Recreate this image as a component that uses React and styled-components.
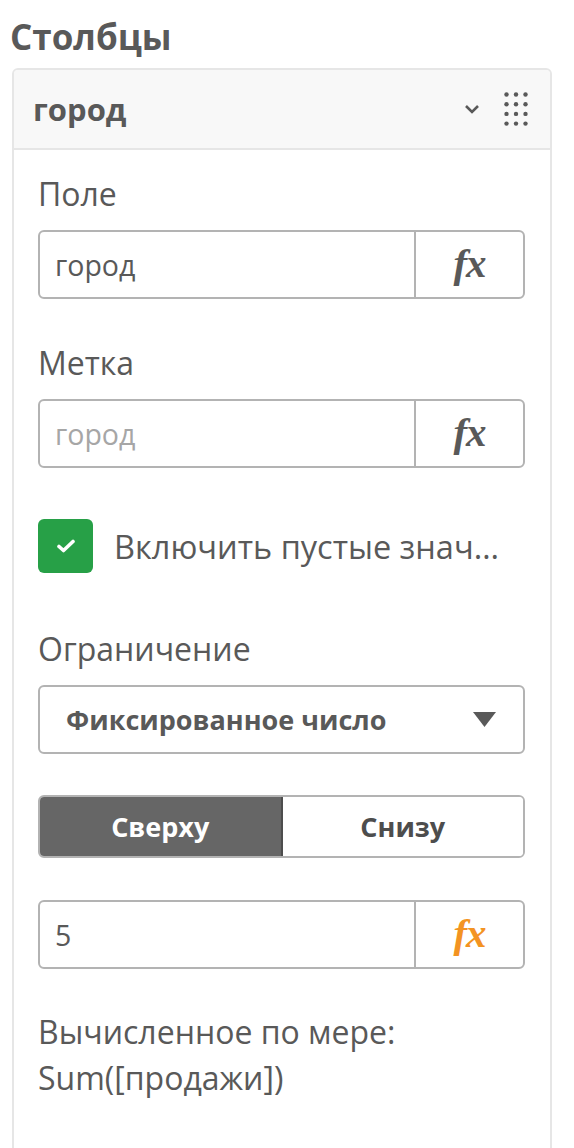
import React from "react"
import styled, { createGlobalStyle } from "styled-components"

const GlobalStyle = createGlobalStyle`
  * { box-sizing: border-box; }
  body {
    margin: 0;
    background: #ffffff;
    font-family: "Open Sans", "Liberation Sans", sans-serif;
    color: #595959;
  }
`

const Page = styled.div`
  padding: 14px 22px 0 12px;
  height: 1148px;
  overflow: hidden;
`

const Title = styled.h2`
  margin: 0 0 8px -2px;
  font-size: 35px;
  line-height: 46px;
  font-weight: 700;
  color: #595959;
`

const Card = styled.div`
  border: 2px solid #e6e6e6;
  border-radius: 6px;
  background: #fff;
  overflow: hidden;
`

const Header = styled.div`
  display: flex;
  align-items: center;
  height: 80px;
  padding: 0 22px 0 19px;
  background: #f8f8f8;
  border-bottom: 2px solid #e6e6e6;
`

const HeaderTitle = styled.div`
  flex: 1;
  font-size: 31px;
  font-weight: 700;
  color: #595959;
`

const HeaderIcons = styled.div`
  display: flex;
  align-items: center;
  gap: 24px;
`

const Body = styled.div`
  display: flex;
  flex-direction: column;
  padding: 24px 25px 120px 24px;
`

const Section = styled.div`
  display: flex;
  flex-direction: column;
  margin-top: ${p => p.$mt || 0}px;
`

const Label = styled.div`
  font-size: 32px;
  line-height: 40px;
  margin-bottom: 16px;
  color: #595959;
`

const InputGroup = styled.div`
  display: flex;
  height: 69px;
  border: 2px solid #b3b3b3;
  border-radius: 6px;
  overflow: hidden;
`

const TextInput = styled.div`
  flex: 1;
  display: flex;
  align-items: center;
  padding: 0 15px;
  font-size: 28.5px;
  color: ${p => (p.$placeholder ? "#a6a6a6" : "#595959")};
`

const FxButton = styled.div`
  width: 109px;
  display: flex;
  align-items: center;
  justify-content: center;
  padding-bottom: 4px;
  border-left: 2px solid #b3b3b3;
  font-family: "Liberation Serif", "DejaVu Serif", serif;
  font-style: italic;
  font-weight: 700;
  font-size: 41px;
  letter-spacing: -1px;
  color: ${p => (p.$accent ? "#f39322" : "#595959")};
`

const CheckRow = styled.label`
  display: flex;
  align-items: center;
  gap: 21px;
  padding: 8px 0 12px;
`

const CheckBox = styled.span`
  width: 55px;
  height: 54px;
  border-radius: 6px;
  background: #27a047;
  display: flex;
  align-items: center;
  justify-content: center;
`

const CheckText = styled.span`
  font-size: 32.5px;
  color: #595959;
  white-space: nowrap;
`

const Select = styled.div`
  display: flex;
  align-items: center;
  justify-content: space-between;
  height: 69px;
  padding: 0 27px 0 26px;
  border: 2px solid #b3b3b3;
  border-radius: 6px;
  font-size: 27px;
  font-weight: 700;
  color: #595959;
`

const Toggle = styled.div`
  display: flex;
  height: 63px;
  border: 2px solid #b3b3b3;
  border-radius: 6px;
  overflow: hidden;
`

const ToggleOption = styled.div`
  flex: 1;
  display: flex;
  align-items: center;
  justify-content: center;
  font-size: 27px;
  font-weight: 700;
  background: ${p => (p.$active ? "#666666" : "#ffffff")};
  color: ${p => (p.$active ? "#ffffff" : "#4d4d4d")};
  & + & {
    border-left: 2px solid #4d4d4d;
  }
`

const Info = styled.div`
  font-size: 32px;
  line-height: 46px;
  color: #595959;
`

const Chevron = () => (
  <svg width="16" height="10" viewBox="0 0 16 10">
    <path d="M2 2 L8 8 L14 2" fill="none" stroke="#595959" strokeWidth="2.6" />
  </svg>
)

const Dots = () => (
  <svg width="24" height="34" viewBox="0 0 24 34">
    {[0, 1, 2, 3].map(r =>
      [0, 1, 2].map(c => (
        <circle key={r + "-" + c} cx={2.5 + c * 9.5} cy={2.5 + r * 9.7} r="2.2" fill="#595959" />
      ))
    )}
  </svg>
)

const Triangle = () => (
  <svg width="23" height="15" viewBox="0 0 23 15">
    <path d="M0 0 L23 0 L11.5 15 Z" fill="#595959" />
  </svg>
)

const Check = () => (
  <svg width="18" height="14" viewBox="0 0 18 14">
    <path d="M2 7.5 L6.5 11.5 L16 2.5" fill="none" stroke="#fff" strokeWidth="3.6" strokeLinecap="round" strokeLinejoin="round" />
  </svg>
)

const FieldInput = ({ value, placeholder, accent }) => (
  <InputGroup>
    <TextInput $placeholder={placeholder}>{value}</TextInput>
    <FxButton $accent={accent}>fx</FxButton>
  </InputGroup>
)

export default function App() {
  return (
    <Page>
      <GlobalStyle />
      <Title>Столбцы</Title>
      <Card>
        <Header>
          <HeaderTitle>город</HeaderTitle>
          <HeaderIcons>
            <Chevron />
            <Dots />
          </HeaderIcons>
        </Header>
        <Body>
          <Section>
            <Label>Поле</Label>
            <FieldInput value="город" />
          </Section>
          <Section $mt={44}>
            <Label>Метка</Label>
            <FieldInput value="город" placeholder />
          </Section>
          <Section $mt={43}>
            <CheckRow>
              <CheckBox><Check /></CheckBox>
              <CheckText>Включить пустые знач…</CheckText>
            </CheckRow>
          </Section>
          <Section $mt={44}>
            <Label>Ограничение</Label>
            <Select>
              Фиксированное число
              <Triangle />
            </Select>
          </Section>
          <Section $mt={41}>
            <Toggle>
              <ToggleOption $active>Сверху</ToggleOption>
              <ToggleOption>Снизу</ToggleOption>
            </Toggle>
          </Section>
          <Section $mt={42}>
            <FieldInput value="5" accent />
          </Section>
          <Section $mt={40}>
            <Info>
              Вычисленное по мере:
              <br />
              Sum([продажи])
            </Info>
          </Section>
        </Body>
      </Card>
    </Page>
  )
}
